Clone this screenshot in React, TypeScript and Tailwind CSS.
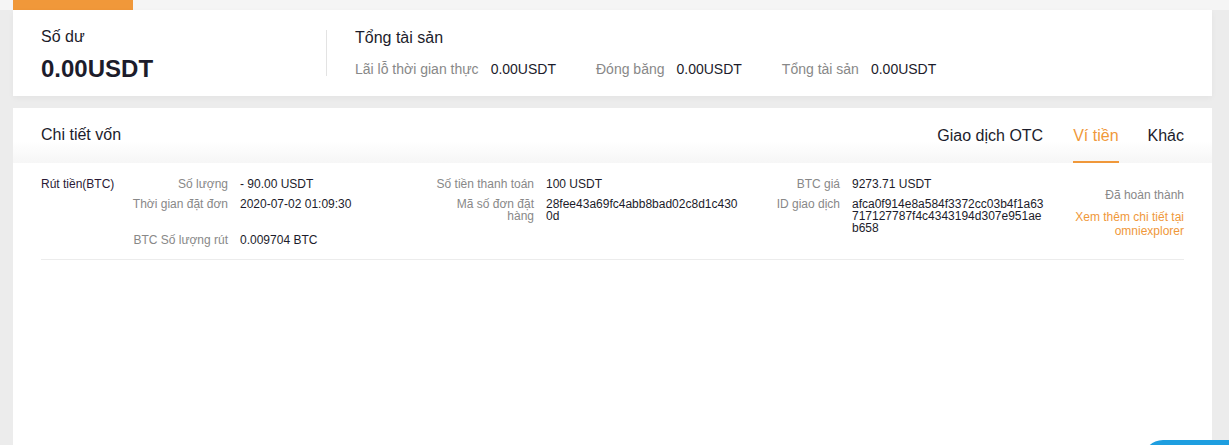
const font = { fontFamily: '"Liberation Sans", Arial, sans-serif' };

type Field = { label: string; value: string } | null;

// one entry per table row, three label/value pairs across
const rows: Field[][] = [
  [
    { label: "Số lượng", value: "- 90.00 USDT" },
    { label: "Số tiền thanh toán", value: "100 USDT" },
    { label: "BTC giá", value: "9273.71 USDT" },
  ],
  [
    { label: "Thời gian đặt đơn", value: "2020-07-02 01:09:30" },
    { label: "Mã số đơn đặt hàng", value: "28fee43a69fc4abb8bad02c8d1c4300d" },
    { label: "ID giao dịch", value: "afca0f914e8a584f3372cc03b4f1a63717127787f4c4343194d307e951aeb658" },
  ],
  [{ label: "BTC Số lượng rút", value: "0.009704 BTC" }, null, null],
];

function Cell({ field }: { field: Field }) {
  if (!field) return <div />;
  return (
    <div className="flex min-h-[20px] gap-[12px] text-[12px] leading-[12px]">
      <div className="w-[100px] shrink-0 text-right text-[#888]">{field.label}</div>
      <div className="w-[192px] break-all text-[#1c1c2b]">{field.value}</div>
    </div>
  );
}

export default function App() {
  return (
    <div className="relative h-[445px] overflow-hidden bg-[#ececec]" style={font}>
      {/* top strip */}
      <div className="h-[10px] bg-[#f5f5f5] pl-[13px]">
        <div className="h-[10px] w-[120px] bg-[#f0983a]" />
      </div>

      <div className="w-[1199px] ml-[13px]">
        {/* balance card */}
        <div className="flex h-[86px] items-center bg-white pl-[28px] shadow-[0_2px_6px_rgba(0,0,0,0.04)]">
          <div className="w-[285px] pt-[5px]">
            <div className="text-[16px] leading-[18px] text-[#1c1c2b]">Số dư</div>
            <div className="mt-[9px] text-[24px] font-bold leading-[28px] text-[#1c1c2b]">0.00USDT</div>
          </div>
          <div className="h-[46px] w-px bg-[#e3e3e3]" />
          <div className="pl-[28px]">
            <div className="text-[16px] leading-[18px] text-[#1c1c2b]">Tổng tài sản</div>
            <div className="mt-[14px] flex text-[14px] leading-[16px]">
              <span className="text-[#888]">Lãi lỗ thời gian thực</span>
              <span className="ml-[12px] text-[#1c1c2b]">0.00USDT</span>
              <span className="ml-[40px] text-[#888]">Đóng băng</span>
              <span className="ml-[12px] text-[#1c1c2b]">0.00USDT</span>
              <span className="ml-[40px] text-[#888]">Tổng tài sản</span>
              <span className="ml-[12px] text-[#1c1c2b]">0.00USDT</span>
            </div>
          </div>
        </div>

        {/* details card */}
        <div className="mt-[12px] h-[400px] bg-white">
          <div className="flex h-[55px] items-stretch justify-between bg-gradient-to-b from-white from-60% to-[#f6f6f6] px-[28px]">
            <div className="pt-[18px] text-[16px] leading-[18px] text-[#1c1c2b]">Chi tiết vốn</div>
            <div className="flex text-[16px] leading-[18px]">
              <div className="pt-[19px] text-[#1c1c2b]">Giao dịch OTC</div>
              <div className="ml-[30px] border-b-[2px] border-[#f0983a] pt-[19px] text-[#f0983a]">Ví tiền</div>
              <div className="ml-[29px] pt-[19px] text-[#1c1c2b]">Khác</div>
            </div>
          </div>

          <div className="mx-[28px] flex border-b border-[#ececec] pt-[15px] pb-[5px]">
            <div className="w-[87px] shrink-0 text-[12px] leading-[12px] text-[#2a1a35]">Rút tiền(BTC)</div>
            <div className="grid w-[918px] shrink-0 grid-cols-[306px_306px_306px]">
              {rows.map((r, i) => r.map((f, j) => <Cell key={`${i}-${j}`} field={f} />))}
            </div>
            <div className="flex-1 pt-[10px] text-right text-[12px] leading-[14px]">
              <div className="text-[#888]">Đã hoàn thành</div>
              <div className="mt-[8px] text-[#f0983a]">Xem thêm chi tiết tại omniexplorer</div>
            </div>
          </div>
        </div>
      </div>

      {/* chat widget */}
      <div className="absolute bottom-[-30px] right-0 h-[35px] w-[86px] rounded-tl-[20px] bg-[#1e9ee0]" />
    </div>
  );
}
